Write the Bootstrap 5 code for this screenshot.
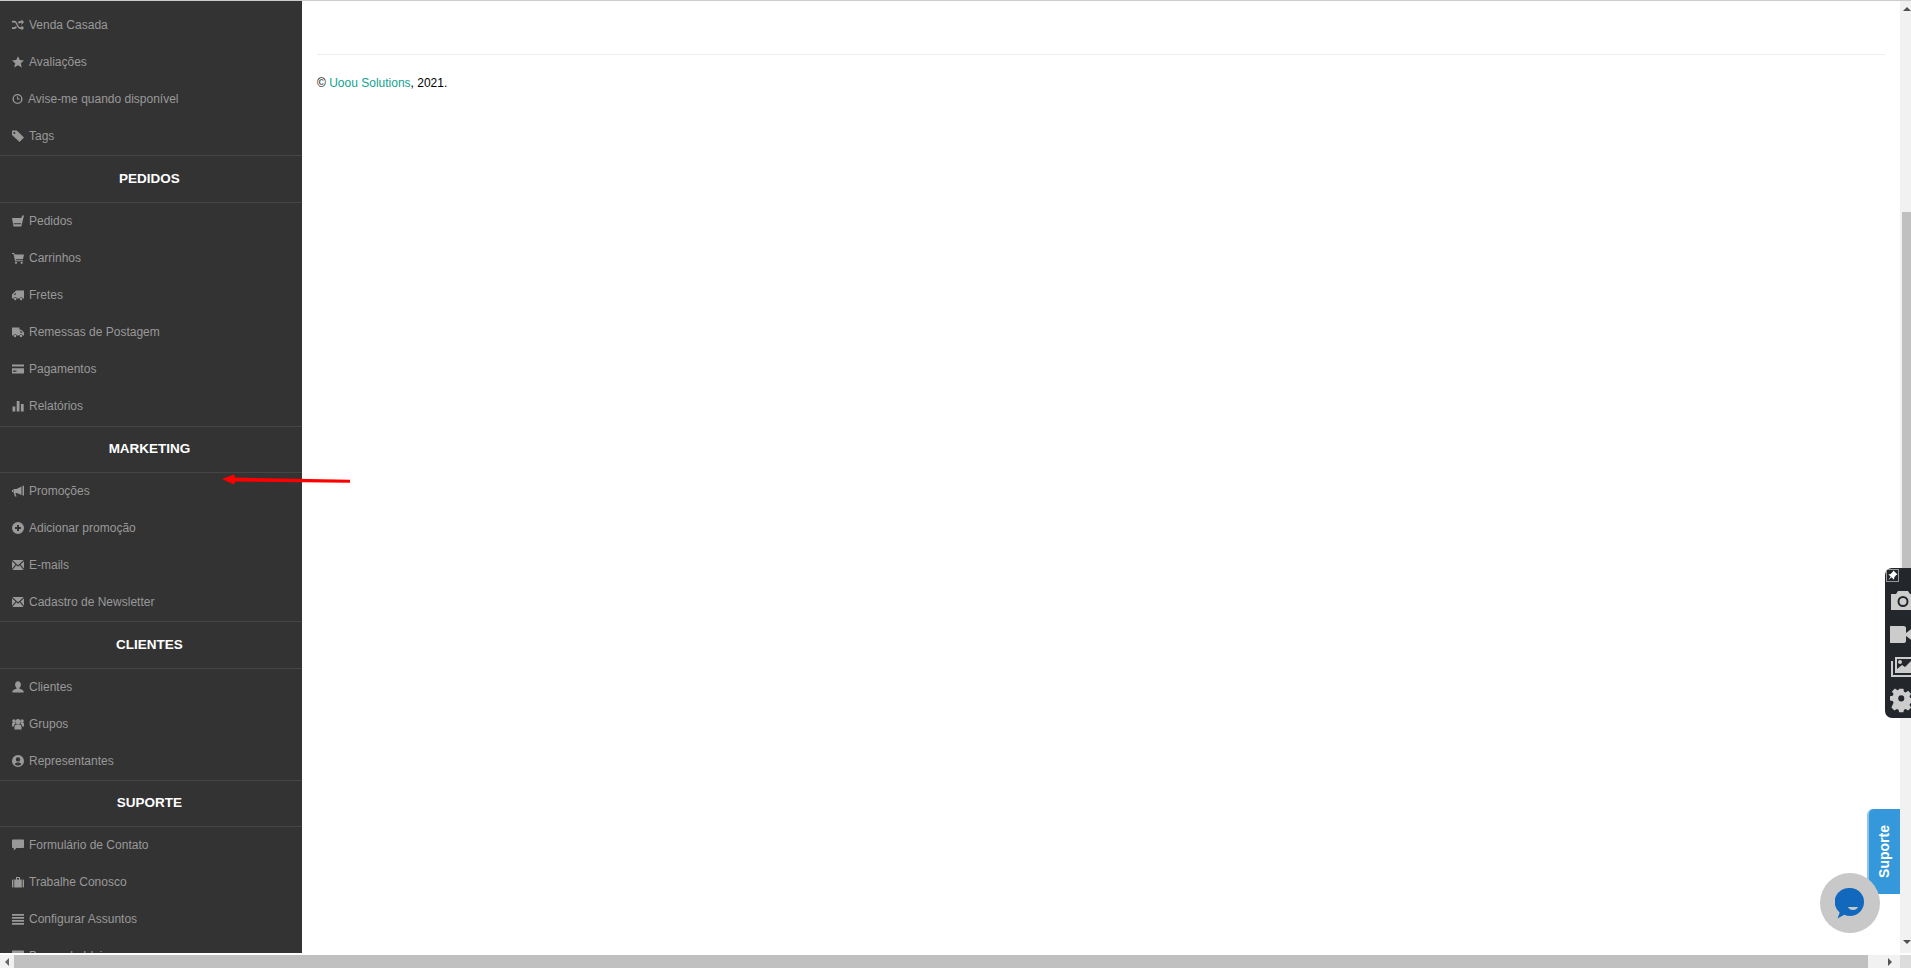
<!DOCTYPE html>
<html lang="pt-br">
<head>
  <meta charset="UTF-8">
  <title>Painel</title>
  <meta name="viewport" content="width=device-width, initial-scale=1">
  <link href="https://cdn.jsdelivr.net/npm/bootstrap@5.3.0/dist/css/bootstrap.min.css" rel="stylesheet">
  <style>
    html, body { height: 100%; overflow: hidden; }
    body { font-family: "Liberation Sans", Arial, sans-serif; font-size: 12px; color: #000; background: #fff; }
    .topline { height: 1px; background: #ccc; flex: none; }
    .sidebar { width: 302px; background: #333; padding-top: 6px; overflow: hidden; flex: none; }
    .side-item { height: 37px; padding-left: 12px; padding-bottom: 1.5px; gap: 5px; color: #999; font-size: 12px; line-height: 1; text-decoration: none; }
    .side-item svg { width: 12px; height: 12px; fill: #999; flex: none; }
    .side-item svg.narrow { width: 11px; }
    .side-head { height: 48px; padding-right: 3px; border-top: 1px solid #454545; border-bottom: 1px solid #454545; color: #fff; font-size: 13.5px; font-weight: 700; }
    .head-slim { height: 47px; }
    .head-gap { margin-top: 1px; }
    .content-area { padding: 53px 15px 0; }
    .foot-rule { border-top: 1px solid #eee; height: 1px; }
    .foot-text { margin-top: 20px; line-height: 17px; }
    .foot-text a { color: #10a38f; text-decoration: none; }
    .vscroll { width: 11px; background: #f1f1f1; position: relative; flex: none; }
    .vthumb { position: absolute; left: 2px; right: 0; top: 211px; height: 505px; background: #c0c0c0; }
    .hscroll { height: 15px; background: #f1f1f1; border-top: 2px solid #fff; flex: none; }
    .hbtn { width: 14px; }
    .hthumb { width: 1854px; background: #c0c0c0; }
    .hcorner { width: 11px; background: #dcdcdc; }
    .arr { width: 0; height: 0; }
    .arr-left { border: 4px solid transparent; border-left-width: 0; border-right: 4px solid #666; }
    .arr-right { border: 4px solid transparent; border-right-width: 0; border-left: 4px solid #555; }
    .arr-up, .arr-down { position: absolute; right: 0; border: 4px solid transparent; border-top-width: 0; border-bottom: 4px solid #505050; }
    .arr-up { top: 6px; }
    .arr-down { top: 939px; border-top: 4px solid #505050; border-bottom-width: 0; }
    .red-arrow { position: absolute; left: 220px; top: 468px; width: 133px; height: 20px; }
    .shot-tool { position: absolute; left: 1885px; top: 568px; width: 26px; height: 150px; background: #23262b; border-radius: 7px 0 0 7px; overflow: hidden; }
    .shot-pin { position: absolute; left: 1px; top: 1px; width: 13px; height: 13px; border: 1px solid #999; }
    .shot-tool svg.tool-ic { position: absolute; left: 5px; width: 26px; height: 26px; fill: #ccc; }
    .help-tab { position: absolute; left: 1867px; top: 809px; width: 33px; height: 85px; background: #3498db; border-radius: 6px 0 0 0; border-left: 2px solid #8fc4e8; color: #fff; font-size: 14px; font-weight: 700; }
    .help-tab span { transform: rotate(-90deg); display: block; }
    .chat-btn { position: absolute; left: 1820px; top: 873px; width: 60px; height: 60px; border-radius: 50%; background: #c8c8c8; }
    .ic-camera { top: 20px; }
    .ic-video { top: 58px; }
    .ic-images { top: 88px; }
    .ic-gear { top: 120px; }
  </style>
</head>
<body class="d-flex flex-column">

  <svg width="0" height="0" class="position-absolute">
    <defs>
      <symbol id="i-shuffle" viewBox="0 0 12 12"><path d="M0 1.800h2.500c2.800 0 3.300 6.400 5.900 6.400H9.500V6.300L12 9l-2.500 2.600V9.900H8.300C5 9.900 4.600 3.500 2.400 3.500H0zM0 8.200h2.400c.6 0 1-.5 1.400-1.200l1 1.500c-.6 1-1.300 1.400-2.400 1.400H0zM9.500.4L12 3 9.500 5.700V3.800H8.400c-.6 0-1 .5-1.400 1.200L6 3.500c.6-1 1.300-1.400 2.400-1.400h1.100z"/></symbol>
      <symbol id="i-star" viewBox="0 0 12 12"><path d="M6 .2l1.800 3.900 4.200.4-3.200 2.800 1 4.200L6 9.300l-3.800 2.200 1-4.200L0 4.500l4.200-.4z"/></symbol>
      <symbol id="i-clock" viewBox="0 0 12 12"><path fill-rule="evenodd" d="M6 .5a5.500 5.500 0 1 0 0 11 5.500 5.500 0 0 0 0-11zm0 1.500a4 4 0 1 1 0 8 4 4 0 0 1 0-8zM5.400 3v3.500H8.500v-1H6.400V3z"/></symbol>
      <symbol id="i-tag" viewBox="0 0 12 12"><path fill-rule="evenodd" d="M0 .5h4.800L12 7.500 7.500 12 0 5zM2.300 2a1 1 0 1 0 0 2 1 1 0 0 0 0-2z"/></symbol>
      <symbol id="i-basket" viewBox="0 0 12 12"><path fill-rule="evenodd" d="M0 3h9.300L10.200.5H12L9.300 11.500H1.500zM1.700 8.300l.2 1h7l.3-1z"/></symbol>
      <symbol id="i-cart" viewBox="0 0 12 12"><path d="M0 1h2.300l.4 1.500H12l-1 4.800H3.700l.2 1h7v1H3.100L1.500 2H0z"/><circle cx="4" cy="10.800" r="1.100"/><circle cx="9.700" cy="10.800" r="1.100"/></symbol>
      <symbol id="i-truckl" viewBox="0 0 12 12"><path fill-rule="evenodd" d="M4 1.500h8v8h-1.200a1.700 1.700 0 0 0-3.300 0H4.900a1.700 1.700 0 0 0-3.300 0H0V5.500zM3.600 3.500L1.800 6h1.800z"/><circle cx="3.200" cy="10" r="1.200"/><circle cx="9.100" cy="10" r="1.200"/></symbol>
      <symbol id="i-truckr" viewBox="0 0 12 12"><path fill-rule="evenodd" d="M0 1.500h7.500v2.300h2L12 6.500v3h-1.300a1.700 1.700 0 0 0-3.300 0H4.700a1.700 1.700 0 0 0-3.300 0H0zM8.400 4.800v2h2.200L9 4.800z"/><circle cx="3" cy="10" r="1.200"/><circle cx="9" cy="10" r="1.200"/></symbol>
      <symbol id="i-card" viewBox="0 0 12 12"><path fill-rule="evenodd" d="M0 1.500h12v9H0zM0 3.500v1.800h12V3.500zM1 7.600v1.200h3.500V7.600z"/></symbol>
      <symbol id="i-bars" viewBox="0 0 12 12"><path d="M.5 6.500h2.800v5H.5zM4.700 1h2.800v10.500H4.700zM8.900 4h2.800v7.500H8.900z"/></symbol>
      <symbol id="i-horn" viewBox="0 0 12 12"><path d="M10.500.8h1.500v9.800h-1.500zM9.500 1.500v8.400L4.700 8H3.300L4.500 11.500H3L1.800 8H1.500V4h3zM0 5h1v2H0z"/></symbol>
      <symbol id="i-plus" viewBox="0 0 12 12"><path fill-rule="evenodd" d="M6 0a6 6 0 1 0 0 12A6 6 0 0 0 6 0zM5 3h2v2h2v2H7v2H5V7H3V5h2z"/></symbol>
      <symbol id="i-mail" viewBox="0 0 12 12"><path d="M.3 1h11.400L6 6.200zM0 2.200l3.500 3.300L0 9.800zM12 2.200v7.600L8.500 5.500zM4.300 6.200L6 7.700l1.700-1.500 3.900 4.800H.4z"/></symbol>
      <symbol id="i-user" viewBox="0 0 12 12"><path d="M6 .3c1.800 0 2.900 1.400 2.900 3.200 0 1.400-.6 2.600-1.400 3.300v.9c1.800.6 4.200 1.300 4.200 3v.9H.3v-.9c0-1.700 2.400-2.400 4.200-3v-.9C3.700 6.100 3.100 4.900 3.100 3.500 3.100 1.700 4.200.3 6 .3z"/></symbol>
      <symbol id="i-group" viewBox="0 0 12 12"><circle cx="6" cy="3.600" r="2.600"/><circle cx="1.900" cy="3" r="1.700"/><circle cx="10.100" cy="3" r="1.700"/><path d="M2.500 11.500V9c0-2 1.300-2.800 3.500-2.800S9.500 7 9.500 9v2.500zM0 8.500V6c0-1.200.8-1.800 2.800-1.800l1 1.300C2.700 6 1.800 7.200 1.800 8.500zM12 8.500V6c0-1.200-.8-1.800-2.800-1.800l-1 1.300c1.100.5 2 1.700 2 3z"/></symbol>
      <symbol id="i-ucircle" viewBox="0 0 12 12"><path fill-rule="evenodd" d="M6 0a6 6 0 1 0 0 12A6 6 0 0 0 6 0zm0 2.200a2.200 2.200 0 1 1 0 4.400 2.200 2.200 0 0 1 0-4.400zM2.700 9.200C3.200 8 4.400 7.500 6 7.500s2.800.5 3.300 1.700C8.500 10 7.300 10.500 6 10.500s-2.500-.5-3.300-1.300z"/></symbol>
      <symbol id="i-comment" viewBox="0 0 12 12"><path d="M.8 .5h10.400c.5 0 .8.300.8.800v6.900c0 .5-.3.800-.8.800H4.500L1.800 11.500V9H.8C.3 9 0 8.700 0 8.200V1.300C0 .8.300 .5 .8 .5z"/></symbol>
      <symbol id="i-case" viewBox="0 0 12 12"><path fill-rule="evenodd" d="M4 1h4v2.500h1.800v8H2.200v-8H4zM5 2v1.500h2V2zM0 4.500c0-.6.400-1 1-1h.4v8H1c-.6 0-1-.4-1-1zM12 4.500c0-.6-.4-1-1-1h-.4v8h.4c.6 0 1-.4 1-1z"/></symbol>
      <symbol id="i-lines" viewBox="0 0 12 12"><path d="M0 1h12v1.800H0zM0 4h12v1.800H0zM0 7h12v1.800H0zM0 10h12v1.800H0z"/></symbol>
    </defs>
  </svg>

  <div class="topline"></div>

  <div class="d-flex flex-grow-1 overflow-hidden">
    <nav class="sidebar">
      <a class="side-item d-flex align-items-center" href="#"><svg><use href="#i-shuffle"/></svg>Venda Casada</a>
      <a class="side-item d-flex align-items-center" href="#"><svg><use href="#i-star"/></svg>Avaliações</a>
      <a class="side-item d-flex align-items-center" href="#"><svg class="narrow"><use href="#i-clock"/></svg>Avise-me quando disponível</a>
      <a class="side-item d-flex align-items-center" href="#"><svg><use href="#i-tag"/></svg>Tags</a>

      <div class="side-head d-flex align-items-center justify-content-center">PEDIDOS</div>
      <a class="side-item d-flex align-items-center" href="#"><svg><use href="#i-basket"/></svg>Pedidos</a>
      <a class="side-item d-flex align-items-center" href="#"><svg><use href="#i-cart"/></svg>Carrinhos</a>
      <a class="side-item d-flex align-items-center" href="#"><svg><use href="#i-truckl"/></svg>Fretes</a>
      <a class="side-item d-flex align-items-center" href="#"><svg><use href="#i-truckr"/></svg>Remessas de Postagem</a>
      <a class="side-item d-flex align-items-center" href="#"><svg><use href="#i-card"/></svg>Pagamentos</a>
      <a class="side-item d-flex align-items-center" href="#"><svg><use href="#i-bars"/></svg>Relatórios</a>

      <div class="side-head head-slim head-gap d-flex align-items-center justify-content-center">MARKETING</div>
      <a class="side-item d-flex align-items-center" href="#"><svg><use href="#i-horn"/></svg>Promoções</a>
      <a class="side-item d-flex align-items-center" href="#"><svg><use href="#i-plus"/></svg>Adicionar promoção</a>
      <a class="side-item d-flex align-items-center" href="#"><svg><use href="#i-mail"/></svg>E-mails</a>
      <a class="side-item d-flex align-items-center" href="#"><svg><use href="#i-mail"/></svg>Cadastro de Newsletter</a>

      <div class="side-head d-flex align-items-center justify-content-center">CLIENTES</div>
      <a class="side-item d-flex align-items-center" href="#"><svg><use href="#i-user"/></svg>Clientes</a>
      <a class="side-item d-flex align-items-center" href="#"><svg><use href="#i-group"/></svg>Grupos</a>
      <a class="side-item d-flex align-items-center" href="#"><svg><use href="#i-ucircle"/></svg>Representantes</a>

      <div class="side-head head-slim d-flex align-items-center justify-content-center">SUPORTE</div>
      <a class="side-item d-flex align-items-center" href="#"><svg><use href="#i-comment"/></svg>Formulário de Contato</a>
      <a class="side-item d-flex align-items-center" href="#"><svg><use href="#i-case"/></svg>Trabalhe Conosco</a>
      <a class="side-item d-flex align-items-center" href="#"><svg><use href="#i-lines"/></svg>Configurar Assuntos</a>
      <a class="side-item d-flex align-items-center" href="#"><svg><use href="#i-comment"/></svg>Banco de Ideias</a>
    </nav>

    <main class="content-area flex-grow-1">
      <div class="foot-rule"></div>
      <p class="foot-text mb-0">© <a href="#">Uoou Solutions</a>, 2021.</p>
    </main>

    <div class="vscroll">
      <div class="arr-up arr"></div>
      <div class="vthumb"></div>
      <div class="arr-down arr"></div>
    </div>
  </div>

  <div class="hscroll d-flex">
    <div class="hbtn d-flex align-items-center justify-content-center"><div class="arr arr-left"></div></div>
    <div class="hthumb"></div>
    <div class="flex-grow-1 d-flex align-items-center justify-content-end pe-2"><div class="arr arr-right"></div></div>
    <div class="hcorner"></div>
  </div>

  <!-- seta vermelha por cima da tela -->
  <svg class="red-arrow" viewBox="0 0 133 20">
    <path fill="#f00" d="M2 11L14 6.500l1 3 115 2.300v3L15 13.500l-1 3z"/>
  </svg>

  <div class="shot-tool">
    <div class="shot-pin">
      <svg viewBox="0 0 12 12" class="d-block"><path fill="#fff" d="M7 .5l4.500 4.500-1.500.5L8 8l-.5 2.500L5 8l-3.500 3L4 7 1.500 5 4 4.300 6.300 2z"/></svg>
    </div>
    <svg class="tool-ic ic-camera" viewBox="0 0 26 26"><path fill-rule="evenodd" d="M1 6h5l2-3h10l2 3h5v16H1zM13 8a5.500 5.500 0 1 0 0 11 5.500 5.500 0 0 0 0-11zm0 2a3.500 3.500 0 1 1 0 7 3.500 3.500 0 0 1 0-7z"/></svg>
    <svg class="tool-ic ic-video" viewBox="0 0 26 26"><path d="M1 0h13c1 0 2 1 2 2v13c0 1-1 2-2 2H1c-1 0-2-1-2-2V2c0-1 1-2 2-2zM16 7l8-6v15l-8-6z"/></svg>
    <svg class="tool-ic ic-images" viewBox="0 0 26 26"><path fill-rule="evenodd" d="M5 1h21v16H5zM7 3v10l5-4 3 2 6-6 5 5V3zM10 4a2 2 0 1 1 0 4 2 2 0 0 1 0-4zM1 5h2v14h21v2H1z"/></svg>
    <svg class="tool-ic ic-gear" viewBox="0 0 30 30"><path fill-rule="evenodd" d="M10.500 1h5l.6 3.200 2 .9 2.800-1.900 3.500 3.500-1.900 2.800.9 2 3.100.6v5l-3.100.6-.9 2 1.900 2.800-3.500 3.500-2.800-1.900-2 .9-.6 3h-5l-.6-3-2-.9-2.800 1.900-3.500-3.500L4.100 17l-.9-2L0 14.500v-5l3.200-.6.9-2-1.900-2.800 3.500-3.500 2.800 1.900 2-.9zM13 8.500a3.500 3.500 0 1 0 0 7 3.500 3.500 0 0 0 0-7z"/></svg>
  </div>

  <div class="help-tab d-flex align-items-center justify-content-center"><span>Suporte</span></div>

  <div class="chat-btn d-flex align-items-center justify-content-center">
    <svg width="30" height="32" viewBox="0 0 30 32">
      <path fill="#1268bd" d="M15 1a14 14 0 0 1 0 28c-2 0-4-.4-5.800-1.200L2.500 31.500l2.200-5.800A14 14 0 0 1 15 1z"/>
      <path fill="#c8c8c8" d="M13 20h10c-.8 2-2.600 3-5 3s-4.200-1-5-3z"/>
    </svg>
  </div>

</body>
</html>
